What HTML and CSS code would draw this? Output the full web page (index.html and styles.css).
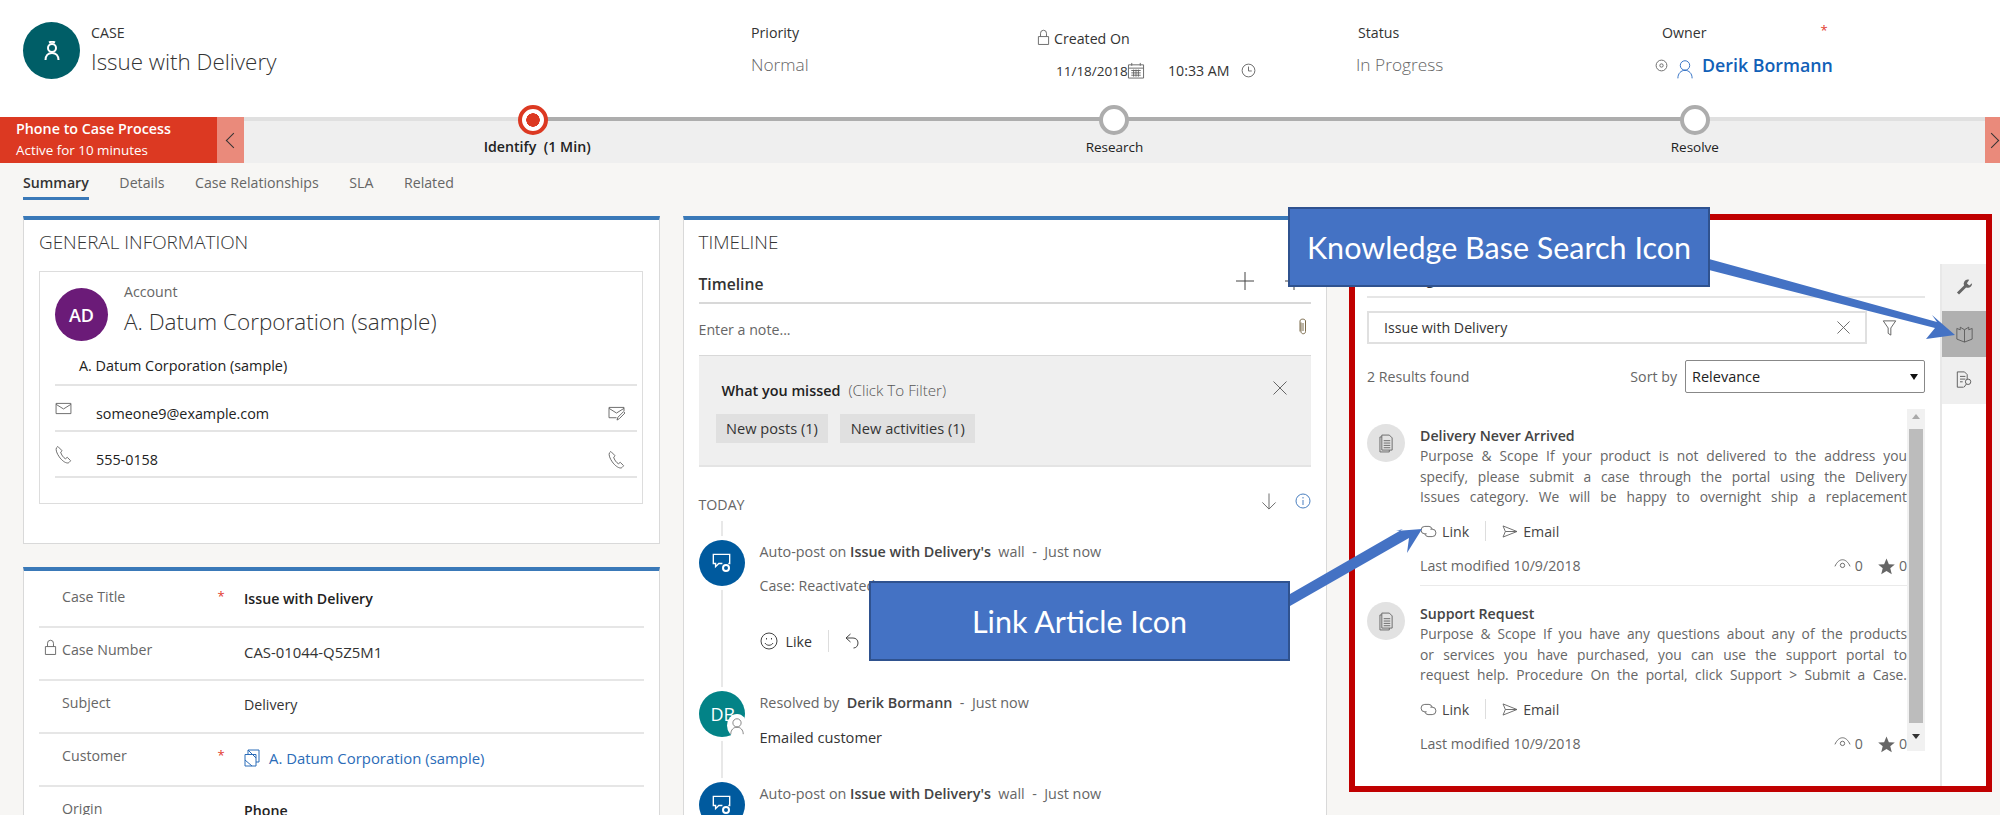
FILE: index.html
```html
<!DOCTYPE html>
<html lang="en">
<head>
    <meta charset="UTF-8">
    <title>Case - Issue with Delivery</title>
    <link rel="stylesheet" href="styles.css">
</head>
<body>
    <svg class="sprite" xmlns="http://www.w3.org/2000/svg">
        <symbol id="i-lock" viewBox="0 0 14 18"><path d="M1.5 8h11v8.500h-11zM3.800 8V4.400a3.200 3.200 0 0 1 6.400 0V8"/></symbol>
        <symbol id="i-cal" viewBox="0 0 18 18"><path d="M1 3h16v14H1zM1 6.500h16M4.500 1v3M13.500 1v3M4 9h10M4 11.500h10M4 14h10M6.500 8v7.500M9 8v7.500M11.500 8v7.500"/></symbol>
        <symbol id="i-clock" viewBox="0 0 16 16"><circle cx="8" cy="8" r="6.800"/><path d="M8 3.800V8.500h3.500"/></symbol>
        <symbol id="i-dot" viewBox="0 0 14 14"><circle cx="7" cy="7" r="5.800"/><circle cx="7" cy="7" r="1.800"/></symbol>
        <symbol id="i-person" viewBox="0 0 18 22"><circle cx="9" cy="7" r="5.300"/><path d="M1 21.500c0-5.500 3.500-9 8-9s8 3.500 8 9"/></symbol>
        <symbol id="i-mail" viewBox="0 0 18 14"><path d="M1 1.500h16v11H1zM1 2.500l8 5 8-5"/></symbol>
        <symbol id="i-mailedit" viewBox="0 0 18 16"><path d="M9 12.500H1v-11h16v4M1 2.500l8 5 8-5M9.500 15l1-3 6-6 1.500 1.500-6 6z"/></symbol>
        <symbol id="i-phone" viewBox="0 0 18 20"><path d="M3 1.500 1.500 3c-1 2 .5 6 3 9.500s6 6.500 9 6.500c1 0 2-1 3-2.500l-3.500-3.500-2 1.500C9 13.500 6.500 10 6 7.500l1.500-1.500z"/></symbol>
        <symbol id="i-account" viewBox="0 0 16 18"><path d="M1 5.500h11V17H1zM4 5.500V1h11v12h-3M4 1l8 8M1 11l7 6"/></symbol>
        <symbol id="i-plus" viewBox="0 0 18 18"><path d="M9 0v18M0 9h18"/></symbol>
        <symbol id="i-close" viewBox="0 0 14 14"><path d="M.5.500l13 13M13.500.500l-13 13"/></symbol>
        <symbol id="i-clip" viewBox="0 0 10 18"><path d="M3 4.500v9c0 3 4.500 3 4.500 0V3c0-2.500-5.500-2.500-5.500 0v10.500M5 5v8"/></symbol>
        <symbol id="i-down" viewBox="0 0 16 18"><path d="M8 .500V17M1 10l7 7 7-7"/></symbol>
        <symbol id="i-info" viewBox="0 0 16 16"><circle cx="8" cy="8" r="7"/><path d="M8 7v5M8 4v1.500"/></symbol>
        <symbol id="i-chat" viewBox="0 0 20 22"><path d="M11 11.500H7l-3.500 3.500v-3.500H1v-10h18v10h-1.500"/></symbol>
        <symbol id="i-smile" viewBox="0 0 18 18"><circle cx="9" cy="9" r="8"/><path d="M5 11c1.500 3 6.500 3 8 0M6.500 6v1.500M11.500 6v1.500"/></symbol>
        <symbol id="i-reply" viewBox="0 0 14 16"><path d="M5.500 1 1 5l4.500 4M1 5h7c3 0 5 2 5 5s-2 5-4.500 5"/></symbol>
        <symbol id="i-link" viewBox="0 0 18 14"><path d="M7 9.500H5a4 4 0 0 1 0-8h4.500a4 4 0 0 1 3.500 3M11 4.500h2a4 4 0 0 1 0 8H8.500a4 4 0 0 1-3.500-3"/></symbol>
        <symbol id="i-send" viewBox="0 0 17 14"><path d="M1 1l15 6-15 6 2.500-6zM3.500 7H16"/></symbol>
        <symbol id="i-eye" viewBox="0 0 18 12"><path d="M1 8.500C3 4 6 1.500 9 1.500s6 2.500 8 7"/><circle cx="9" cy="7.500" r="2.300"/></symbol>
        <symbol id="i-star" viewBox="0 0 18 18"><path class="fill" d="M9 .500l2.500 6 6.300.400-4.800 4 1.600 6.300L9 13.800l-5.600 3.400L5 10.900l-4.800-4 6.300-.400z"/></symbol>
        <symbol id="i-filter" viewBox="0 0 16 18"><path d="M1 1h14L9.500 9v8l-3-2V9z"/></symbol>
        <symbol id="i-doc" viewBox="0 0 16 20"><path d="M3 3H1v16h10v-2M3 1h8l3 3v13H3zM5 7h7M5 9.500h7M5 12h7M5 14.500h7"/></symbol>
        <symbol id="i-wrench" viewBox="0 0 18 18"><path class="fill" d="M12.500 1a4.500 4.500 0 0 0-4 6.300L1 14.800 3.200 17l7.500-7.500A4.500 4.500 0 0 0 17 5l-3 2.500-2.500-2.500 2.500-3.800z"/></symbol>
        <symbol id="i-book" viewBox="0 0 20 20"><path d="M1 3.500l4 1.500V2l5 3 5-3v3l4-1.500V16l-9 3.500L1 16zM10 5v14.500"/></symbol>
        <symbol id="i-docsearch" viewBox="0 0 18 20"><path d="M8 18H1V1h8l3 3v5M4 6h6M4 9h6M4 12h3"/><circle cx="13" cy="12" r="3"/><path d="M11 14.500 8.500 18"/></symbol>
        <symbol id="i-headset" viewBox="0 0 18 20"><circle cx="9" cy="7" r="4"/><path d="M2.500 19c0-4 2.500-7 6.500-7s6.500 3 6.500 7M6 1.500c2-1 4-1 6 0"/></symbol>
    </svg>

    <header class="case-header">
        <div class="case-title">
            <div class="case-avatar"><svg class="ico-headset"><use href="#i-headset"/></svg></div>
            <div>
                <div class="case-type">CASE</div>
                <div class="case-name">Issue with Delivery</div>
            </div>
        </div>
        <div class="head-field">
            <div class="head-label">Priority</div>
            <div class="head-value">Normal</div>
        </div>
        <div class="head-field created">
            <div class="head-label"><svg class="ico ico-lock"><use href="#i-lock"/></svg>Created On</div>
            <div class="created-value">
                <span class="date-text">11/18/2018</span><svg class="ico ico-cal"><use href="#i-cal"/></svg>
                <span class="time-text">10:33 AM</span><svg class="ico ico-clock"><use href="#i-clock"/></svg>
            </div>
        </div>
        <div class="head-field">
            <div class="head-label">Status</div>
            <div class="head-value status-value">In Progress</div>
        </div>
        <div class="head-field">
            <div class="head-label owner-label">Owner<span class="req owner-req">*</span></div>
            <div class="owner-value">
                <svg class="ico ico-dot"><use href="#i-dot"/></svg>
                <svg class="ico ico-person"><use href="#i-person"/></svg>
                <a class="owner-link">Derik Bormann</a>
            </div>
        </div>
    </header>

    <div class="process">
        <div class="proc-flag">
            <div class="proc-name">Phone to Case Process</div>
            <div class="proc-time">Active for 10 minutes</div>
        </div>
        <div class="proc-arrow proc-prev"><span class="chev chev-left"></span></div>
        <div class="proc-track">
            <div class="stage">
                <div class="node node-active"></div>
                <div class="stage-label"><b>Identify</b> <b class="stage-time">(1 Min)</b></div>
            </div>
            <div class="stage">
                <div class="node"></div>
                <div class="stage-label">Research</div>
            </div>
            <div class="stage">
                <div class="node"></div>
                <div class="stage-label">Resolve</div>
            </div>
        </div>
        <div class="proc-arrow proc-next"><span class="chev chev-right"></span></div>
    </div>

    <nav class="tabs">
        <a class="tab active">Summary</a>
        <a class="tab">Details</a>
        <a class="tab">Case Relationships</a>
        <a class="tab">SLA</a>
        <a class="tab">Related</a>
    </nav>

    <main class="columns">
        <div class="col-left">
            <section class="card card-general">
                <h3 class="card-title">GENERAL INFORMATION</h3>
                <div class="contact-box">
                    <div class="contact-head">
                        <div class="contact-avatar">AD</div>
                        <div>
                            <div class="contact-type">Account</div>
                            <div class="contact-name">A. Datum Corporation (sample)</div>
                        </div>
                    </div>
                    <div class="contact-row contact-sub">A. Datum Corporation (sample)</div>
                    <div class="contact-row">
                        <svg class="ico ico-mail"><use href="#i-mail"/></svg>
                        <span class="contact-val">someone9@example.com</span>
                        <svg class="ico ico-mailedit"><use href="#i-mailedit"/></svg>
                    </div>
                    <div class="contact-row">
                        <svg class="ico ico-phone"><use href="#i-phone"/></svg>
                        <span class="contact-val">555-0158</span>
                        <svg class="ico ico-phone-end"><use href="#i-phone"/></svg>
                    </div>
                </div>
            </section>

            <section class="card card-form">
                <div class="form-row">
                    <span class="form-label">Case Title</span><span class="req">*</span>
                    <span class="form-val strong">Issue with Delivery</span>
                </div>
                <div class="form-row">
                    <svg class="ico ico-lock form-lock"><use href="#i-lock"/></svg>
                    <span class="form-label">Case Number</span><span class="req"></span>
                    <span class="form-val form-code">CAS-01044-Q5Z5M1</span>
                </div>
                <div class="form-row">
                    <span class="form-label">Subject</span><span class="req"></span>
                    <span class="form-val">Delivery</span>
                </div>
                <div class="form-row">
                    <span class="form-label">Customer</span><span class="req">*</span>
                    <svg class="ico ico-account"><use href="#i-account"/></svg>
                    <a class="form-link">A. Datum Corporation (sample)</a>
                </div>
                <div class="form-row">
                    <span class="form-label">Origin</span><span class="req"></span>
                    <span class="form-val strong">Phone</span>
                </div>
            </section>
        </div>

        <section class="card card-timeline">
            <h3 class="card-title">TIMELINE</h3>
            <div class="tl-head">
                <span class="tl-title">Timeline</span>
                <svg class="ico ico-plus"><use href="#i-plus"/></svg>
                <svg class="ico ico-plus tl-more"><use href="#i-plus"/></svg>
            </div>
            <div class="tl-note">
                <span>Enter a note...</span>
                <svg class="ico ico-clip"><use href="#i-clip"/></svg>
            </div>
            <div class="missed">
                <div class="missed-top">
                    <span class="missed-title">What you missed</span>
                    <span class="missed-hint">(Click To Filter)</span>
                    <svg class="ico ico-close"><use href="#i-close"/></svg>
                </div>
                <div class="missed-chips">
                    <span class="chip">New posts (1)</span>
                    <span class="chip">New activities (1)</span>
                </div>
            </div>
            <div class="tl-today">
                <span>TODAY</span>
                <svg class="ico ico-down"><use href="#i-down"/></svg>
                <svg class="ico ico-info"><use href="#i-info"/></svg>
            </div>
            <div class="feed">
                <article class="post">
                    <div class="post-avatar blue"><svg class="ico-chat"><use href="#i-chat"/></svg><span class="gear"></span></div>
                    <div class="post-body">
                        <div class="post-line">Auto-post on <b>Issue with Delivery's</b>&nbsp; wall &nbsp;-&nbsp; Just now</div>
                        <div class="post-text">Case: Reactivated</div>
                        <div class="post-actions">
                            <svg class="ico ico-smile"><use href="#i-smile"/></svg>
                            <span>Like</span>
                            <span class="sep"></span>
                            <svg class="ico ico-reply"><use href="#i-reply"/></svg>
                        </div>
                    </div>
                </article>
                <article class="post post-resolved">
                    <div class="post-avatar teal">DB
                        <span class="post-badge"><svg class="ico ico-badge"><use href="#i-person"/></svg></span>
                    </div>
                    <div class="post-body">
                        <div class="post-line">Resolved by&nbsp; <b>Derik Bormann</b> &nbsp;-&nbsp; Just now</div>
                        <div class="post-text dark">Emailed customer</div>
                    </div>
                </article>
                <article class="post">
                    <div class="post-avatar blue"><svg class="ico-chat"><use href="#i-chat"/></svg><span class="gear"></span></div>
                    <div class="post-body">
                        <div class="post-line">Auto-post on <b>Issue with Delivery's</b>&nbsp; wall &nbsp;-&nbsp; Just now</div>
                    </div>
                </article>
            </div>
        </section>

        <section class="kb-frame">
            <div class="kb-main">
                <div class="kb-title">Knowledge Search</div>
                <div class="kb-search-row">
                    <div class="kb-search">
                        <span>Issue with Delivery</span>
                        <svg class="ico ico-close"><use href="#i-close"/></svg>
                    </div>
                    <svg class="ico ico-filter"><use href="#i-filter"/></svg>
                </div>
                <div class="kb-sort-row">
                    <span class="kb-count">2 Results found</span>
                    <span class="kb-sort-label">Sort by</span>
                    <div class="kb-select"><span>Relevance</span><span class="caret"></span></div>
                </div>
                <div class="kb-list">
                    <div class="kb-items">
                        <article class="kb-item kb-item-first">
                            <div class="kb-icon"><svg class="ico ico-doc"><use href="#i-doc"/></svg></div>
                            <div class="kb-body">
                                <div class="kb-name">Delivery Never Arrived</div>
                                <p class="kb-desc">Purpose &amp; Scope If your product is not delivered to the address you<br>specify, please submit a case through the portal using the Delivery<br>Issues category. We will be happy to overnight ship a replacement</p>
                                <div class="kb-actions">
                                    <svg class="ico ico-link"><use href="#i-link"/></svg><span>Link</span>
                                    <span class="sep"></span>
                                    <svg class="ico ico-send"><use href="#i-send"/></svg><span>Email</span>
                                </div>
                                <div class="kb-meta">
                                    <span>Last modified 10/9/2018</span>
                                    <span class="kb-stats"><svg class="ico ico-eye"><use href="#i-eye"/></svg>0<svg class="ico ico-star"><use href="#i-star"/></svg>0</span>
                                </div>
                            </div>
                        </article>
                        <article class="kb-item">
                            <div class="kb-icon"><svg class="ico ico-doc"><use href="#i-doc"/></svg></div>
                            <div class="kb-body">
                                <div class="kb-name">Support Request</div>
                                <p class="kb-desc">Purpose &amp; Scope If you have any questions about any of the products<br>or services you have purchased, you can use the support portal to<br>request help. Procedure On the portal, click Support &gt; Submit a Case.</p>
                                <div class="kb-actions">
                                    <svg class="ico ico-link"><use href="#i-link"/></svg><span>Link</span>
                                    <span class="sep"></span>
                                    <svg class="ico ico-send"><use href="#i-send"/></svg><span>Email</span>
                                </div>
                                <div class="kb-meta">
                                    <span>Last modified 10/9/2018</span>
                                    <span class="kb-stats"><svg class="ico ico-eye"><use href="#i-eye"/></svg>0<svg class="ico ico-star"><use href="#i-star"/></svg>0</span>
                                </div>
                            </div>
                        </article>
                    </div>
                    <div class="kb-scroll">
                        <span class="scroll-up"></span>
                        <span class="scroll-thumb"></span>
                        <span class="scroll-down"></span>
                    </div>
                </div>
            </div>
            <aside class="kb-rail">
                <div class="rail-btn"><svg class="ico ico-rail"><use href="#i-wrench"/></svg></div>
                <div class="rail-btn selected"><svg class="ico ico-rail"><use href="#i-book"/></svg></div>
                <div class="rail-btn"><svg class="ico ico-rail"><use href="#i-docsearch"/></svg></div>
            </aside>
        </section>
    </main>

    <!-- annotations drawn on top of the screenshot -->
    <svg class="arrows" viewBox="0 0 2000 815" xmlns="http://www.w3.org/2000/svg">
        <polygon points="1709,259 1937,322 1932,315 1955,335 1926,339 1935,328 1709,270"/>
        <polygon points="1290,594 1403,529 1396,531 1422,529 1407,553 1409,538 1290,606"/>
    </svg>
    <div class="callout callout-kb">Knowledge Base Search Icon</div>
    <div class="callout callout-link">Link Article Icon</div>
</body>
</html>
```

FILE: styles.css
```css
* {
    box-sizing: border-box;
}

html, body {
    height: 100%;
}

body {
    margin: 0;
    width: 2000px;
    height: 815px;
    overflow: hidden;
    position: relative;
    font-family: 'Open Sans', 'Noto Sans', sans-serif;
    font-size: 14.200px;
    color: #333;
    background: #f7f6f4;
}

.sprite {
    display: none;
}

.ico {
    display: block;
    flex: none;
    fill: none;
    stroke: #666;
    stroke-width: 1;
}

.fill {
    fill: #666;
    stroke: none;
}

b {
    font-weight: 600;
}

/* header */
.case-header {
    height: 117px;
    padding-left: 23px;
    background: white;
    display: grid;
    grid-template-columns: 728px 286px 321px 304px 1fr;
}

.case-title {
    display: flex;
    gap: 11px;
    padding-top: 22px;
}

.case-avatar {
    width: 57px;
    height: 57px;
    border-radius: 50%;
    background: #005e67;
    display: flex;
    align-items: center;
    justify-content: center;
}

.ico-headset {
    width: 18px;
    height: 20px;
    fill: none;
    stroke: white;
    stroke-width: 2;
}

.case-type {
    font-size: 14.200px;
    line-height: 18px;
    margin-top: 2px;
}

.case-name {
    font-size: 22.400px;
    font-weight: 300;
    line-height: 30px;
    margin-top: 5px;
    color: #333;
}

.head-field {
    padding-top: 24px;
}

.head-label {
    line-height: 18px;
    display: flex;
    align-items: center;
}

.head-value {
    margin-top: 10px;
    font-size: 17.300px;
    font-weight: 300;
    line-height: 26px;
    color: #666;
}

.status-value {
    margin-left: -2px;
}

.created .head-label {
    margin-top: 6px;
    gap: 4px;
}

.ico-lock {
    width: 13px;
    height: 17px;
    margin-top: -4px;
}

.created-value {
    display: flex;
    align-items: center;
    margin-top: 13px;
    padding-left: 19px;
}

.date-text {
    width: 71px;
    font-size: 13.500px;
}

.ico-cal {
    width: 18px;
    height: 17px;
}

.time-text {
    margin-left: 23px;
    width: 73px;
}

.ico-clock {
    width: 15px;
    height: 15px;
}

.owner-label {
    position: relative;
}

.owner-req {
    margin-left: 114px;
    margin-top: -6px;
}

.owner-value {
    display: flex;
    align-items: center;
    margin-top: 10px;
    margin-left: -7px;
    height: 26px;
}

.ico-dot {
    width: 13px;
    height: 13px;
}

.ico-person {
    width: 16px;
    height: 20px;
    margin: 8px 9px 0 9px;
    stroke: #2266c0;
}

.owner-link {
    font-size: 17.800px;
    font-weight: 600;
    color: #1160b7;
}

.req {
    color: #e23a2e;
    font-size: 13px;
}

/* process bar */
.process {
    height: 46px;
    display: flex;
    background: #efefef;
}

.proc-flag {
    width: 217px;
    background: #dc3922;
    color: white;
    padding: 2px 0 0 16px;
    line-height: 20px;
}

.proc-name {
    font-weight: 600;
    font-size: 14.300px;
}

.proc-time {
    margin-top: 1px;
    font-size: 13.400px;
}

.proc-arrow {
    background: #ea8a7b;
    display: flex;
    align-items: center;
    overflow: hidden;
}

.proc-prev {
    width: 27px;
    justify-content: center;
}

.proc-next {
    width: 15px;
    padding-left: 7px;
}

.chev {
    display: block;
    width: 11px;
    height: 11px;
    flex: none;
    border-left: 1px solid #333;
    border-bottom: 1px solid #333;
}

.chev-left {
    transform: rotate(45deg);
    margin-left: 5px;
}

.chev-right {
    transform: rotate(225deg);
    margin-left: -6px;
}

.proc-track {
    flex: 1;
    display: grid;
    grid-template-columns: repeat(3, 1fr);
    background:
        linear-gradient(to right, #e0e0e0 289px, #adadad 289px, #adadad 1450px, #e0e0e0 1450px) top / 100% 4px no-repeat,
        #efefef;
}

.stage {
    display: flex;
    flex-direction: column;
    align-items: center;
}

.node {
    width: 30px;
    height: 30px;
    margin-top: -12px;
    border-radius: 50%;
    border: 4px solid #adadad;
    background: white;
}

.node-active {
    margin-left: -2px;
    border-color: #dc3922;
    background: radial-gradient(circle, #dc3922 0 6.500px, white 7px);
}

.node-active + .stage-label {
    margin-left: 6px;
}

.stage-label {
    margin-top: 3px;
    font-size: 13.500px;
    line-height: 18px;
    color: #222;
}

.stage-label b {
    font-size: 14.200px;
}

.stage-time {
    margin-left: 4px;
}

/* tabs */
.tabs {
    height: 37px;
    padding-left: 23px;
    display: flex;
    gap: 30.500px;
}

.tab {
    height: 37px;
    padding-top: 10px;
    line-height: 20px;
    color: #666;
}

.tab.active {
    color: #333;
    font-weight: 600;
    border-bottom: 3px solid #3a79b8;
}

/* page columns */
.columns {
    display: grid;
    grid-template-columns: 637px 644px 643px;
    column-gap: 22.500px;
    padding: 16px 0 0 23px;
    align-items: start;
}

.col-left {
    display: flex;
    flex-direction: column;
    gap: 23px;
}

.card {
    background: white;
    border: 1px solid #d9d9d9;
    border-top: 4px solid #3a79b8;
}

.card-title {
    margin: 0;
    padding: 9.500px 0 0 15px;
    font-size: 18.900px;
    line-height: 24px;
    font-weight: 300;
    color: #333;
}

.card-general {
    height: 328px;
}

.contact-box {
    margin: 17.500px 16px 0 15px;
    height: 233px;
    padding: 16px 5px 0 15px;
    border: 1px solid #ddd;
}

.contact-head {
    display: flex;
    gap: 16px;
    height: 63px;
}

.contact-avatar {
    width: 53px;
    height: 53px;
    border-radius: 50%;
    background: #6b1b78;
    color: white;
    font-size: 18px;
    font-weight: 600;
    display: flex;
    align-items: center;
    justify-content: center;
}

.contact-type {
    margin-top: -4px;
    line-height: 16px;
    color: #666;
}

.contact-name {
    margin-top: 8px;
    font-size: 22.500px;
    font-weight: 300;
    line-height: 28px;
    color: #333;
}

.contact-row {
    height: 46px;
    padding-top: 10px;
    display: flex;
    align-items: center;
    border-bottom: 2px solid #e4e4e4;
}

.contact-sub {
    padding-left: 24px;
    padding-top: 0;
    height: 35px;
    padding-bottom: 4px;
    font-size: 14.400px;
    color: #222;
}

.contact-val {
    flex: 1;
    padding-left: 24px;
    font-size: 14.350px;
    color: #222;
}

.ico-mail {
    width: 17px;
    height: 13px;
    margin-top: -10px;
}

.ico-mailedit {
    width: 17px;
    height: 15px;
    margin-right: 12px;
}

.ico-phone {
    width: 17px;
    height: 19px;
    margin-top: -10px;
}

.ico-phone-end {
    width: 17px;
    height: 19px;
    margin-right: 12px;
}

.card-form {
    height: 300px;
    padding: 4px 15px 0;
}

.form-row {
    height: 53px;
    display: flex;
    align-items: center;
    position: relative;
    padding-left: 23px;
    border-bottom: 2px solid #e6e6e6;
    padding-bottom: 4px;
}

.form-label {
    width: 155.500px;
    color: #666;
    margin-top: -5px;
}

.form-lock {
    position: absolute;
    left: 5px;
    top: 15px;
}

.form-row .req {
    width: 26.500px;
    margin-top: -6px;
}

.form-val {
    color: #333;
}

.form-val.strong {
    font-weight: 600;
    color: #222;
}

.form-code {
    font-size: 14.900px;
}

.ico-account {
    width: 16px;
    height: 18px;
    margin-right: 9px;
    stroke: #2b6cb8;
}

.form-link {
    font-size: 14.900px;
    color: #2b6cb8;
}

/* timeline */
.card-timeline {
    height: 640px;
    padding: 0 15px;
}

.card-timeline .card-title {
    padding-left: 0;
}

.tl-head {
    height: 42px;
    margin-top: 8.500px;
    padding-top: 9px;
    display: flex;
    align-items: flex-start;
    border-bottom: 2px solid #d8d8d8;
}

.tl-title {
    flex: 1;
    font-size: 15.700px;
    font-weight: 600;
    line-height: 26px;
}

.ico-plus {
    width: 18px;
    height: 18px;
    margin-top: 1px;
    margin-right: 31px;
    stroke: #444;
}

.tl-more {
    margin-right: 8px;
}

.tl-note {
    height: 51px;
    display: flex;
    justify-content: space-between;
    align-items: center;
    color: #666;
}

.ico-clip {
    width: 10px;
    height: 18px;
    margin-right: 3px;
    stroke: #7a6a4a;
    margin-top: -5px;
}

.missed {
    height: 112px;
    background: #efefef;
    border-top: 1px solid #d8d8d8;
    border-bottom: 2px solid #e4e4e4;
    padding: 24px 0 0 17px;
}

.missed-top {
    display: flex;
    padding-left: 6px;
    gap: 8px;
    align-items: center;
    height: 20px;
}

.missed-title {
    font-size: 14.400px;
    font-weight: 600;
    color: #222;
}

.missed-hint {
    flex: 1;
    font-size: 15.200px;
    font-weight: 300;
    color: #555;
}

.missed-top .ico-close {
    width: 14px;
    height: 14px;
    margin-right: 24px;
    margin-top: -4px;
}

.missed-chips {
    display: flex;
    gap: 12px;
    margin-top: 14px;
}

.chip {
    background: #e0e0e0;
    height: 29px;
    line-height: 29px;
    padding: 0 10.500px;
    font-size: 14.600px;
    color: #333;
}

.tl-today {
    height: 54px;
    display: flex;
    align-items: center;
    color: #666;
    padding-top: 20px;
}

.tl-today span {
    flex: 1;
}

.ico-down {
    width: 16px;
    height: 17px;
    margin-right: 18px;
    margin-top: -6px;
}

.ico-info {
    width: 16px;
    height: 16px;
    stroke: #4a7fc0;
    margin-top: -6px;
}

.feed {
    position: relative;
    padding-top: 19px;
}

.feed::before {
    content: "";
    position: absolute;
    left: 22px;
    top: 0;
    bottom: 0;
    width: 2px;
    background: #e8e8e8;
}

.post {
    display: flex;
    gap: 15px;
    position: relative;
    height: 151px;
}

.post-resolved {
    height: 91px;
}

.post-avatar {
    width: 46px;
    height: 46px;
    flex: none;
    border-radius: 50%;
    color: white;
    font-size: 18px;
    display: flex;
    align-items: center;
    justify-content: center;
    position: relative;
    box-shadow: 0 0 0 4px white;
}

.post-avatar.blue {
    background: #005a9e;
}

.post-avatar.teal {
    background: #038387;
    justify-content: flex-start;
    padding-left: 12px;
}

.ico-chat {
    width: 19px;
    height: 20px;
    fill: none;
    stroke: white;
    stroke-width: 1.500;
}

.gear {
    position: absolute;
    left: 23px;
    top: 24px;
    width: 8px;
    height: 8px;
    border-radius: 50%;
    border: 2px solid white;
    background: #005a9e;
}

.post-badge {
    position: absolute;
    right: -2px;
    bottom: 0;
    width: 20px;
    height: 23px;
    border-radius: 50%;
    background: white;
    display: flex;
    align-items: center;
    justify-content: center;
}

.ico-badge {
    width: 14px;
    height: 18px;
}

.post-body {
    flex: 1;
}

.post-line {
    font-size: 14.360px;
    line-height: 24px;
    color: #666;
}

.post-line b {
    color: #444;
}

.post-text {
    margin-top: 10px;
    line-height: 24px;
    color: #666;
}

.post-text.dark {
    font-size: 14.600px;
    color: #333;
}

.post-actions {
    display: flex;
    align-items: center;
    gap: 8px;
    margin-top: 31px;
    height: 24px;
}

.ico-smile {
    width: 18px;
    height: 18px;
    stroke: #444;
}

.sep {
    width: 1px;
    height: 22px;
    background: #ddd;
    margin: 0 8px;
}

.ico-reply {
    width: 14px;
    height: 16px;
    stroke: #444;
}

/* knowledge panel */
.kb-frame {
    height: 578px;
    margin-top: -2px;
    border: 6px solid #c00000;
    background: white;
    display: flex;
}

.kb-main {
    width: 585px;
    padding: 0 15px 0 12px;
}

.kb-title {
    padding-top: 50px;
    height: 78px;
    line-height: 20px;
    font-weight: 600;
    border-bottom: 2px solid #e6e6e6;
}

.kb-search-row {
    display: flex;
    align-items: center;
    margin-top: 13px;
}

.kb-search {
    width: 500px;
    height: 33px;
    border: 2px solid #e0e0e0;
    padding: 0 15px;
    display: flex;
    justify-content: space-between;
    align-items: center;
}

.kb-search .ico-close {
    width: 13px;
    height: 13px;
}

.ico-filter {
    width: 15px;
    height: 16px;
    margin-left: 15px;
    stroke: #555;
}

.kb-sort-row {
    display: flex;
    align-items: center;
    height: 33px;
    margin-top: 16px;
    color: #666;
}

.kb-count {
    flex: 1;
}

.kb-sort-label {
    margin-right: 8px;
}

.kb-select {
    width: 240px;
    height: 33px;
    border: 1px solid #888;
    border-radius: 2px;
    padding: 0 6px;
    font-size: 14.500px;
    display: flex;
    align-items: center;
    justify-content: space-between;
    color: #222;
}

.caret {
    width: 0;
    height: 0;
    border: 4px solid transparent;
    border-top: 6px solid #111;
    margin-top: 4px;
}

.kb-list {
    display: flex;
    margin-top: 16px;
    height: 342px;
}

.kb-items {
    width: 540px;
}

.kb-item {
    display: flex;
    gap: 15px;
    padding-top: 15px;
    height: 180px;
}

.kb-item-first {
    height: 178px;
}

.kb-icon {
    width: 38px;
    height: 38px;
    flex: none;
    border-radius: 50%;
    background: #e2e2e2;
    display: flex;
    align-items: center;
    justify-content: center;
}

.ico-doc {
    width: 15px;
    height: 19px;
}

.kb-body {
    flex: 1;
}

.kb-item-first .kb-body {
    border-bottom: 1px solid #eaeaea;
    height: 162px;
}

.kb-name {
    line-height: 20px;
    margin-top: 2px;
    font-weight: 600;
    color: #444;
}

.kb-desc {
    margin: 0;
    line-height: 20.670px;
    font-size: 13.800px;
    color: #666;
    text-align: justify;
    text-align-last: justify;
}

.kb-actions {
    display: flex;
    align-items: center;
    gap: 5px;
    height: 20px;
    margin-top: 13px;
    color: #444;
}

.kb-actions .sep {
    margin: 0 11px 0 11px;
    height: 20px;
}

.ico-link {
    width: 17px;
    height: 13px;
}

.ico-send {
    width: 16px;
    height: 13px;
}

.kb-meta {
    display: flex;
    justify-content: space-between;
    height: 20px;
    line-height: 20px;
    margin-top: 15px;
    color: #666;
}

.kb-stats {
    display: flex;
    align-items: center;
    gap: 4px;
}

.ico-eye {
    width: 17px;
    height: 12px;
    margin-top: -5px;
}

.ico-star {
    width: 17px;
    height: 17px;
    margin-left: 11px;
}

.kb-scroll {
    width: 18px;
    background: #f1f1f1;
    display: flex;
    flex-direction: column;
    align-items: center;
}

.scroll-up, .scroll-down {
    width: 0;
    height: 0;
    border: 4px solid transparent;
}

.scroll-up {
    border-bottom: 5px solid #aaa;
    margin: 1px 0 6px;
}

.scroll-thumb {
    width: 14px;
    height: 294px;
    margin-top: 4px;
    background: #bcbcbc;
}

.scroll-down {
    border-top: 5px solid #333;
    margin-top: 11px;
}

.kb-rail {
    flex: 1;
    margin-top: 44px;
    border-left: 2px solid #e8e8e8;
}

.rail-btn {
    height: 46.500px;
    background: #efefef;
    display: flex;
    align-items: center;
    justify-content: center;
}

.rail-btn.selected {
    background: #b0b0b0;
}

.ico-rail {
    width: 17px;
    height: 18px;
    stroke: #555;
}

/* annotations */
.arrows {
    position: absolute;
    left: 0;
    top: 0;
    width: 2000px;
    height: 815px;
    fill: #4472c4;
}

.callout {
    position: absolute;
    background: #4472c4;
    border: 2px solid #2f528f;
    color: white;
    font-family: 'Lato', sans-serif;
    font-size: 30.500px;
    display: flex;
    align-items: center;
    justify-content: center;
}

.callout-kb {
    left: 1288px;
    top: 207px;
    width: 422px;
    height: 80px;
}

.callout-link {
    left: 869px;
    top: 581px;
    width: 421px;
    height: 80px;
}
```
